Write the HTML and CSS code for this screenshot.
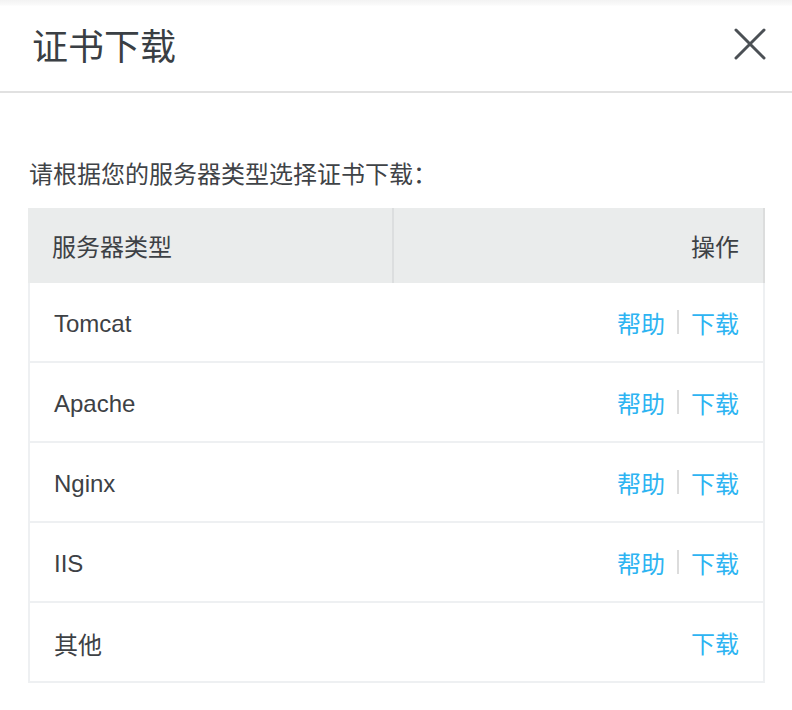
FILE: index.html
```html
<!DOCTYPE html>
<html lang="zh-CN">
<head>
  <title>证书下载</title>
  <meta charset="UTF-8">
  <meta name="viewport" content="width=device-width, initial-scale=1.0">
  <link rel="stylesheet" href="styles.css">
</head>
<body>
  <div class="modal">
    <div class="modal-header">
      <h1>证书下载</h1>
      <a href="#" class="close-btn" aria-label="关闭">
        <svg width="32" height="32" viewBox="0 0 32 32">
          <path d="M2 2L30 30M30 2L2 30" stroke="#4b5055" stroke-width="3" stroke-linecap="round" fill="none"/>
        </svg>
      </a>
    </div>
    <div class="modal-body">
      <p class="tip">请根据您的服务器类型选择证书下载：</p>
      <div class="cert-table">
        <div class="table-head">
          <div class="th">服务器类型</div>
          <div class="th th-right">操作</div>
        </div>
        <div class="table-row">
          <span class="name">Tomcat</span>
          <span class="actions"><a href="#">帮助</a><i class="sep"></i><a href="#">下载</a></span>
        </div>
        <div class="table-row">
          <span class="name">Apache</span>
          <span class="actions"><a href="#">帮助</a><i class="sep"></i><a href="#">下载</a></span>
        </div>
        <div class="table-row">
          <span class="name">Nginx</span>
          <span class="actions"><a href="#">帮助</a><i class="sep"></i><a href="#">下载</a></span>
        </div>
        <div class="table-row">
          <span class="name">IIS</span>
          <span class="actions"><a href="#">帮助</a><i class="sep"></i><a href="#">下载</a></span>
        </div>
        <div class="table-row">
          <span class="name">其他</span>
          <span class="actions"><a href="#">下载</a></span>
        </div>
      </div>
    </div>
  </div>
</body>
</html>
```

FILE: styles.css
```css
body {
  font-family: 'Liberation Sans', 'Noto Sans CJK SC', sans-serif;
  background: #fff;
  color: #3a3e42;
  margin: 0;
  padding: 0;
}
.modal-header {
  height: 91px;
  padding: 0 26px 0 32px;
  display: flex;
  justify-content: space-between;
  align-items: center;
  background: linear-gradient(#f3f3f3, #fafafa 5px, #fff 6px);
  border-bottom: 2px solid #e1e1e1;
}
.modal-header h1 {
  margin: 0;
  font-size: 36px;
  line-height: 36px;
  font-weight: 400;
  color: #3a3f44;
  font-family: 'Noto Sans CJK SC', sans-serif;
  padding-bottom: 3px;
}
.close-btn {
  display: block;
  width: 32px;
  height: 32px;
  margin-bottom: 3px;
}
.close-btn svg {
  display: block;
}
.modal-body {
  padding: 70px 27px 0 28px;
}
.tip {
  margin: 0 0 21px 1px;
  font-size: 24px;
  line-height: 24px;
  color: #3f4347;
}
.table-head {
  display: grid;
  grid-template-columns: 366px 1fr;
  height: 75px;
  background: #eaecec;
  border-right: 2px solid #dcdddd;
}
.th {
  display: flex;
  align-items: center;
  padding: 0 24px;
  font-size: 24px;
  color: #3d4145;
  border-right: 2px solid #dcdedf;
}
.th-right {
  justify-content: flex-end;
  border-right: none;
}
.table-row {
  display: flex;
  justify-content: space-between;
  align-items: center;
  height: 78px;
  padding: 0 24px;
  border: 2px solid #eef0f2;
  border-top: none;
  font-size: 24px;
}
.name {
  color: #3d4145;
  padding-top: 3px;
}
.actions {
  display: flex;
  align-items: center;
}
.actions a {
  color: #2db4f2;
  text-decoration: none;
}
.sep {
  display: block;
  width: 2px;
  height: 24px;
  margin: 0 12px;
  background: #dcdcdc;
}
```
